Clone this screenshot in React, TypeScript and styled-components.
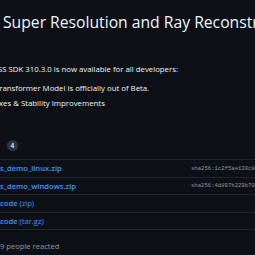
import React from 'react';
import styled, { createGlobalStyle } from 'styled-components';

const GlobalStyle = createGlobalStyle`
  html, body {
    margin: 0;
    padding: 0;
    background: #0d1117;
  }
`;

const assets = [
  { name: 's_demo_linux.zip', sha: 'sha256:1c2f5ae130c8d2e94b7a' },
  { name: 's_demo_windows.zip', sha: 'sha256:4d897b229b7083c1ae5f' },
  { name: 'code', suffix: '(zip)' },
  { name: 'code', suffix: '(tar.gz)' },
];

const ReleasePage = () => {
  return (
    <>
      <GlobalStyle />
      <Page>
        <Title>Super Resolution and Ray Reconstruction</Title>
        <Body>
          <Paragraph shift={-2}>
            SS SDK 310.3.0 is now available for all developers:
          </Paragraph>
          <List>
            <Item shift={-5}>Transformer Model is officially out of Beta.</Item>
            <Item shift={-1}>xes &amp; Stability Improvements</Item>
          </List>
        </Body>
        <AssetsHeader>
          <Counter>4</Counter>
        </AssetsHeader>
        <AssetList>
          {assets.map((a, i) => (
            <AssetRow key={i}>
              <AssetLink>
                <b>{a.name}</b>
                {a.suffix && <span> {a.suffix}</span>}
              </AssetLink>
              {a.sha && <Sha>{a.sha}</Sha>}
            </AssetRow>
          ))}
        </AssetList>
        <Reactions>9 people reacted</Reactions>
      </Page>
    </>
  );
};

const Page = styled.div`
  width: 255px;
  height: 255px;
  overflow: hidden;
  background: #0d1117;
  color: #f0f6fc;
  font-family: 'Open Sans', 'Noto Sans', sans-serif;
  white-space: nowrap;
`;

const Title = styled.h1`
  margin: 10px 0 0 3px;
  font-size: 15.7px;
  line-height: 24px;
  font-weight: 500;
  color: #f0f6fc;
`;

const Body = styled.div`
  margin-top: 28px;
  font-size: 7.8px;
`;

const Paragraph = styled.p<{ shift: number }>`
  margin: 0 0 5px ${({ shift }) => shift}px;
  line-height: 14px;
`;

const List = styled.ul`
  margin: 0;
  padding: 0;
  list-style: none;
`;

const Item = styled.li<{ shift: number }>`
  margin-left: ${({ shift }) => shift}px;
  line-height: 15px;
`;

const AssetsHeader = styled.div`
  display: flex;
  align-items: center;
  height: 22px;
  margin-top: 23px;
  padding-left: 7px;
`;

const Counter = styled.span`
  display: inline-flex;
  align-items: center;
  justify-content: center;
  width: 11px;
  height: 11px;
  border-radius: 50%;
  background: #2f353d;
  color: #f0f6fc;
  font-size: 6.6px;
  font-weight: 600;
`;

const AssetList = styled.div`
  margin-top: 3px;
  border-bottom: 1px solid #21262d;
`;

const AssetRow = styled.div`
  display: flex;
  align-items: center;
  height: 16.5px;
  border-top: 1px solid #21262d;
`;

const AssetLink = styled.span`
  flex: 0 0 191px;
  color: #4493f8;
  font-size: 7.6px;

  & > b {
    font-weight: 600;
  }
`;

const Sha = styled.span`
  font-family: 'Liberation Mono', 'DejaVu Sans Mono', monospace;
  font-size: 5.6px;
  color: #9198a1;
`;

const Reactions = styled.div`
  margin-top: 9px;
  font-size: 7.6px;
  line-height: 14px;
  color: #9198a1;
`;

export default ReleasePage;
